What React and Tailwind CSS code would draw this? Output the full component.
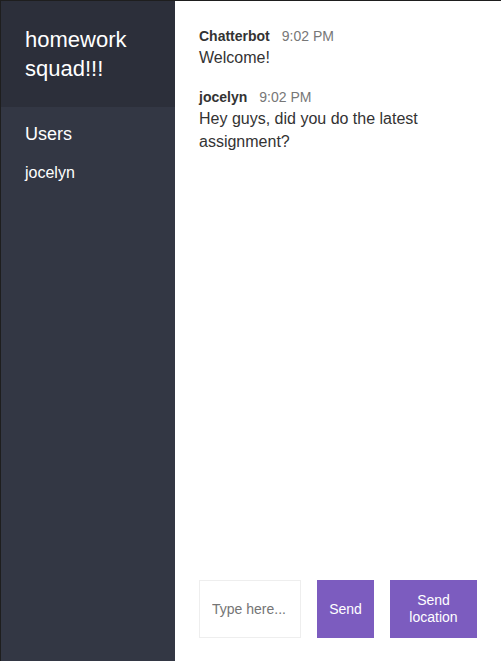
import React from "react";

export default function App() {
  const font = { fontFamily: '"Liberation Sans", Arial, Helvetica, sans-serif' };
  return (
    <div
      className="flex h-[661px] w-[501px] border-t border-l border-[#1e1e1e] bg-white text-[#333] text-[16px]"
      style={font}
    >
      <aside className="flex w-[174px] shrink-0 flex-col bg-[#333744] text-white">
        <h2 className="bg-[#2c2f3a] p-6 text-[22px] font-normal leading-[29px]">
          homework squad!!!
        </h2>
        <h3 className="mb-1 px-6 pt-[13px] text-[18px] font-medium leading-[29px]">Users</h3>
        <ul className="px-6 pt-[10px] text-[16px] font-light leading-[19px]">
          <li>jocelyn</li>
        </ul>
      </aside>
      <main className="flex min-w-0 flex-1 flex-col">
        <div className="flex-1 px-6 pt-[26px]">
          <div className="mb-[19px]">
            <p className="text-[14px] leading-[19px]">
              <span className="mr-3 font-bold">Chatterbot</span>
              <span className="text-[#777]">9:02 PM</span>
            </p>
            <p className="leading-[23px]">Welcome!</p>
          </div>
          <div className="mb-[19px]">
            <p className="text-[14px] leading-[19px]">
              <span className="mr-3 font-bold">jocelyn</span>
              <span className="text-[#777]">9:02 PM</span>
            </p>
            <p className="leading-[23px]">Hey guys, did you do the latest assignment?</p>
          </div>
        </div>
        <div className="flex gap-4 px-6 pt-6 pb-[23px]">
          <input
            type="text"
            placeholder="Type here..."
            className="h-[58px] w-[102px] border border-[#eeeeee] px-3 text-[14px] outline-none placeholder:text-[#757575]"
            style={font}
          />
          <button
            className="h-[58px] w-[57px] bg-[#7C5CBF] p-3 text-[14px] leading-[17px] text-white"
            style={font}
          >
            Send
          </button>
          <button
            className="h-[58px] w-[87px] bg-[#7C5CBF] p-3 text-[14px] leading-[17px] text-white"
            style={font}
          >
            Send location
          </button>
        </div>
      </main>
    </div>
  );
}
